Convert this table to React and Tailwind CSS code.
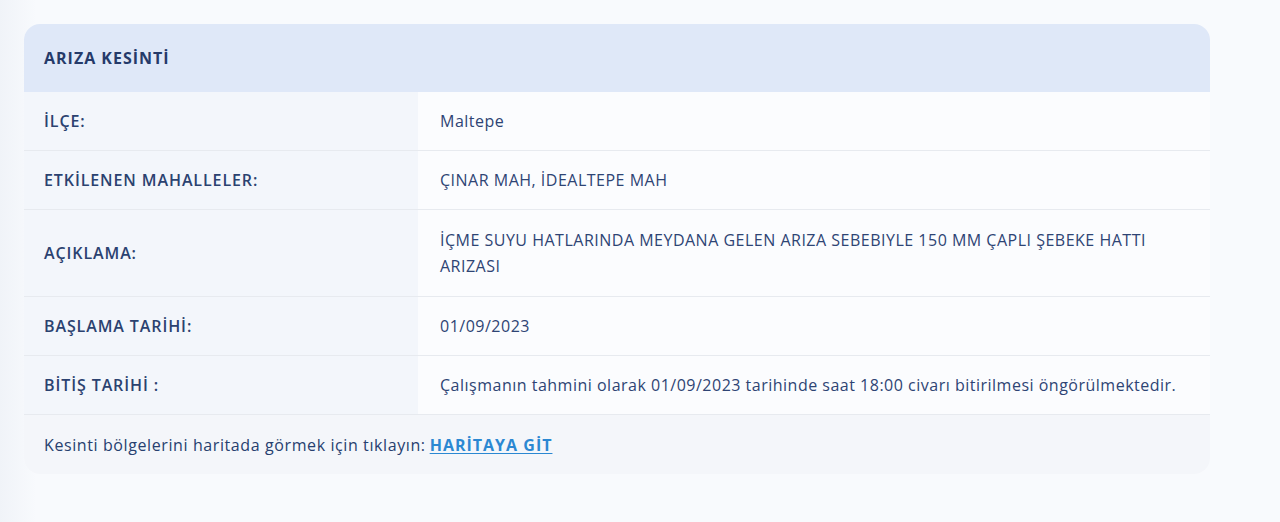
import React from "react";

const ROWS = [
  { label: "İLÇE:", value: "Maltepe", pad: "py-4" },
  { label: "ETKİLENEN MAHALLELER:", value: "ÇINAR MAH, İDEALTEPE MAH", pad: "py-4" },
  {
    label: "AÇIKLAMA:",
    value: "İÇME SUYU HATLARINDA MEYDANA GELEN ARIZA SEBEBIYLE 150 MM ÇAPLI ŞEBEKE HATTI ARIZASI",
    pad: "py-[17px]",
  },
  { label: "BAŞLAMA TARİHİ:", value: "01/09/2023", pad: "py-4" },
  {
    label: "BİTİŞ TARİHİ :",
    value: "Çalışmanın tahmini olarak 01/09/2023 tarihinde saat 18:00 civarı bitirilmesi öngörülmektedir.",
    pad: "py-4",
  },
];

export default function App() {
  return (
    <div
      className="min-h-[522px] w-full bg-[linear-gradient(90deg,#f0f3f8_0px,#f8fafd_36px,#f8fafd_100%)] pl-6 pr-[70px] pt-6 pb-[50px] tracking-[0.5px] text-[#27406f]"
      style={{ fontFamily: "'Open Sans', Lato, sans-serif" }}
    >
      <div className="overflow-hidden rounded-2xl bg-[#fbfcfe]">
        <div className="flex h-[68px] items-center bg-[#dfe8f8] px-5">
          <h2 className="text-[16px] font-bold tracking-[1px] text-[#253a6a]">ARIZA KESİNTİ</h2>
        </div>
        {ROWS.map((r) => (
          <div key={r.label} className="grid grid-cols-[394px_1fr] border-b border-[#e7eaef]">
            <div className="flex items-center bg-[#f3f6fb] px-5 text-[16px] font-semibold leading-[26px] tracking-[0.9px] text-[#2b4270]">
              {r.label}
            </div>
            <div className={`flex items-center pl-[22px] pr-5 text-[16px] leading-[26px] text-[#2e4474] ${r.pad}`}>
              {r.value}
            </div>
          </div>
        ))}
        <div className="flex h-[59px] items-center bg-[#f4f6fa] px-5 text-[16px] tracking-[0.6px]">
          <span>Kesinti bölgelerini haritada görmek için tıklayın:</span>
          <a href="#" className="ml-1 font-bold tracking-[1px] text-[#2b88d2] underline underline-offset-2">
            HARİTAYA GİT
          </a>
        </div>
      </div>
    </div>
  );
}
